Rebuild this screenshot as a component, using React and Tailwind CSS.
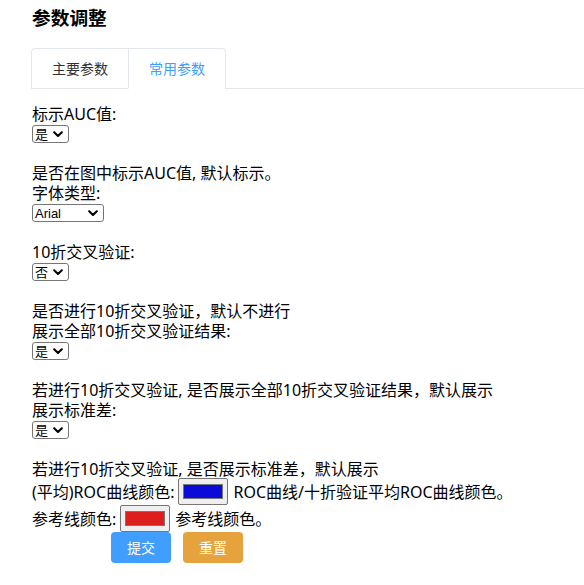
import React from "react";

const FONT = { fontFamily: '"Noto Sans", "Noto Sans CJK SC", sans-serif' };

function Chevron() {
  return (
    <svg width="10" height="7" viewBox="0 0 10 7" className="shrink-0">
      <path d="M1.2 1.3 L5 5 L8.8 1.3" fill="none" stroke="#000" strokeWidth="2.1" strokeLinecap="round" strokeLinejoin="round" />
    </svg>
  );
}

function Select({ value, w, latin }) {
  return (
    <div
      className={`flex items-center h-[18px] border border-[#767676] rounded-[3px] bg-white pl-[2px] pr-[5px] text-[13px] leading-none text-black ${w}`}
      style={latin ? { fontFamily: '"Liberation Sans", Arial, sans-serif' } : undefined}
    >
      <span>{value}</span>
      <span className="ml-auto flex items-center">
        <Chevron />
      </span>
    </div>
  );
}

function Item({ label, value, w = "w-[37px]", latin, desc, descH = "h-[20px]" }) {
  return (
    <div>
      <div className="h-[20px] leading-[20px] whitespace-nowrap">{label}</div>
      <div className="h-[39px] pt-px">
        <Select value={value} w={w} latin={latin} />
      </div>
      {desc && <div className={`${descH} leading-[20px] whitespace-nowrap`}>{desc}</div>}
    </div>
  );
}

function ColorBox({ color }) {
  return (
    <div className="w-[50px] h-[27px] shrink-0 flex items-center justify-center bg-[#efefef] border border-[#767676] rounded-[2px]">
      <div className="w-[40px] h-[15px] border border-[#777777]" style={{ backgroundColor: color }} />
    </div>
  );
}

export default function App() {
  return (
    <div className="w-[584px] h-[585px] bg-white text-black overflow-hidden pl-[32px]" style={FONT}>
      <div className="mt-[6px] h-[24px] leading-[24px] text-[18.72px] font-bold">参数调整</div>

      <div className="mt-[18px] -ml-px flex border-b border-[#e4e7ed]">
        <div className="flex -mb-px border border-b-0 border-[#e4e7ed] rounded-t-[4px] text-[14px]">
          <div className="h-[40px] px-5 leading-[39px] border-b border-[#e4e7ed] text-[#303133]">主要参数</div>
          <div className="h-[40px] px-5 leading-[39px] border-l border-b border-l-[#e4e7ed] border-b-white text-[#409eff]">常用参数</div>
        </div>
      </div>

      <div className="mt-[15px] text-[16px]">
        <Item label="标示AUC值:" value="是" desc="是否在图中标示AUC值, 默认标示。" />
        <Item label="字体类型:" value="Arial" w="w-[72px]" latin />
        <Item label="10折交叉验证:" value="否" desc="是否进行10折交叉验证，默认不进行" />
        <Item label="展示全部10折交叉验证结果:" value="是" desc="若进行10折交叉验证, 是否展示全部10折交叉验证结果，默认展示" />
        <Item label="展示标准差:" value="是" desc="若进行10折交叉验证, 是否展示标准差，默认展示" descH="h-[19px]" />

        <div className="flex items-center h-[27px] gap-[4px] whitespace-nowrap">
          <span>(平均)ROC曲线颜色:</span>
          <ColorBox color="#0b0bd9" />
          <span className="ml-px">ROC曲线/十折验证平均ROC曲线颜色。</span>
        </div>
        <div className="flex items-center h-[27px] gap-[4px] whitespace-nowrap">
          <span>参考线颜色:</span>
          <ColorBox color="#de1e1e" />
          <span className="ml-px">参考线颜色。</span>
        </div>

        <div className="flex gap-[12px] ml-[79px]">
          <button className="w-[60px] h-[31px] rounded-[4px] bg-[#409eff] text-white text-[14px] leading-none">提交</button>
          <button className="w-[60px] h-[31px] rounded-[4px] bg-[#e6a23c] text-white text-[14px] leading-none">重置</button>
        </div>
      </div>
    </div>
  );
}
